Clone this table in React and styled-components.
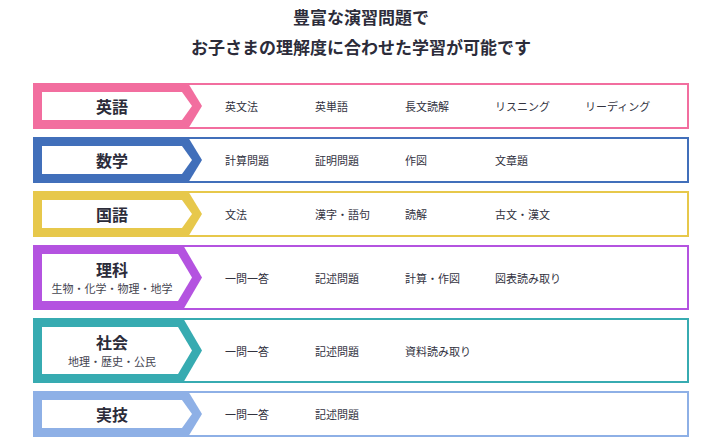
import React from 'react';
import styled, { createGlobalStyle } from 'styled-components';

const subjects = [
    { name: '英語', color: '#f26e9f', items: ['英文法', '英単語', '長文読解', 'リスニング', 'リーディング'] },
    { name: '数学', color: '#416fba', items: ['計算問題', '証明問題', '作図', '文章題'] },
    { name: '国語', color: '#e7c84b', items: ['文法', '漢字・語句', '読解', '古文・漢文'] },
    { name: '理科', sub: '生物・化学・物理・地学', color: '#b453e0', items: ['一問一答', '記述問題', '計算・作図', '図表読み取り'] },
    { name: '社会', sub: '地理・歴史・公民', color: '#37abb1', items: ['一問一答', '記述問題', '資料読み取り'] },
    { name: '実技', color: '#8eb0e6', items: ['一問一答', '記述問題'] },
];

const App = () => {
    return (
        <>
            <GlobalStyle />
            <Page>
                <Heading>
                    豊富な演習問題で
                    <br />
                    お子さまの理解度に合わせた学習が可能です
                </Heading>
                <List>
                    {subjects.map((s) => (
                        <Row key={s.name} $color={s.color} $tall={!!s.sub}>
                            <Label $color={s.color} $tall={!!s.sub}>
                                <LabelInner $tall={!!s.sub}>
                                    <LabelName>{s.name}</LabelName>
                                    {s.sub && <LabelSub>{s.sub}</LabelSub>}
                                </LabelInner>
                            </Label>
                            <Items>
                                {s.items.map((item) => (
                                    <Item key={item}>{item}</Item>
                                ))}
                            </Items>
                        </Row>
                    ))}
                </List>
            </Page>
        </>
    );
};

export default App;

const GlobalStyle = createGlobalStyle`
    body {
        margin: 0;
        background: #fff;
        font-family: "Noto Sans CJK JP", "Noto Sans", sans-serif;
        color: #33333f;
    }
`;

const Page = styled.div`
    width: 656px;
    padding: 2px 0 0 33px;
`;

const Heading = styled.h1`
    margin: 0 0 21px;
    text-align: center;
    font-size: 17px;
    line-height: 30px;
    font-weight: 700;
    color: #2c2c3a;
`;

const List = styled.div`
    display: flex;
    flex-direction: column;
    gap: 8px;
`;

const Row = styled.div`
    display: flex;
    align-items: center;
    box-sizing: border-box;
    height: ${(p) => (p.$tall ? 65 : 46)}px;
    border: 2px solid ${(p) => p.$color};
    background: #fff;
`;

const Label = styled.div`
    align-self: stretch;
    flex-shrink: 0;
    display: flex;
    box-sizing: border-box;
    width: 169px;
    margin: -2px 0 -2px -2px;
    padding: 9px 0 9px 9px;
    background: ${(p) => p.$color};
    clip-path: ${(p) => {
        const t = p.$tall ? 19 : 14;
        return `polygon(0 0, calc(100% - ${t}px) 0, 100% 50%, calc(100% - ${t}px) 100%, 0 100%)`;
    }};
`;

const LabelInner = styled.div`
    flex: 1;
    display: flex;
    flex-direction: column;
    align-items: center;
    justify-content: center;
    margin-right: 10px;
    padding-right: 10px;
    background: #fff;
    clip-path: ${(p) => {
        const t = p.$tall ? 14 : 10;
        return `polygon(0 0, calc(100% - ${t}px) 0, 100% 50%, calc(100% - ${t}px) 100%, 0 100%)`;
    }};
`;

const LabelName = styled.div`
    font-size: 16px;
    font-weight: 700;
    line-height: 20px;
    color: #2c2c3a;
`;

const LabelSub = styled.div`
    font-size: 11px;
    line-height: 16px;
    margin-top: 1px;
    color: #444450;
`;

const Items = styled.div`
    display: flex;
    padding-left: 23px;
`;

const Item = styled.div`
    width: 90px;
    font-size: 11px;
    color: #33333f;
`;
